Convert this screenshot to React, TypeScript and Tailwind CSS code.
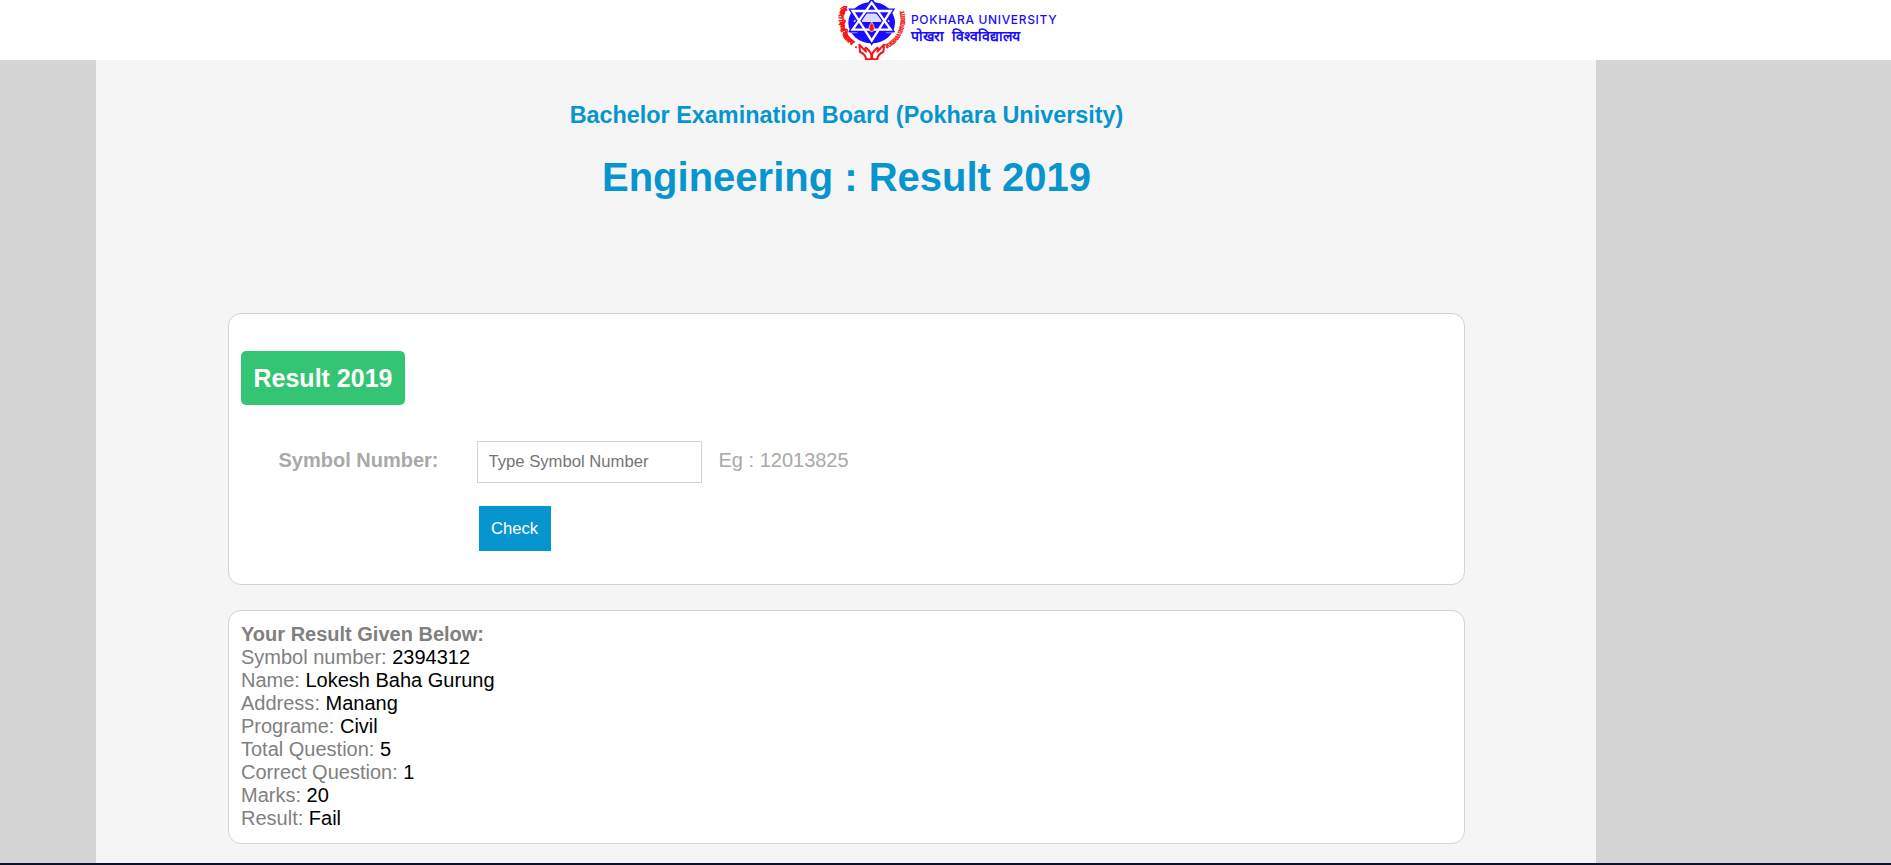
import React from "react";

const rows: [string, string][] = [
  ["Symbol number", "2394312"],
  ["Name", "Lokesh Baha Gurung"],
  ["Address", "Manang"],
  ["Programe", "Civil"],
  ["Total Question", "5"],
  ["Correct Question", "1"],
  ["Marks", "20"],
  ["Result", "Fail"],
];

function Emblem() {
  return (
    <svg viewBox="0 0 216 180" className="h-[60px] w-[72px] shrink-0">
      <defs>
        <path id="ringLeft" d="M 20 14 A 97 97 0 0 0 50 138" />
        <path id="ringRight" d="M 153 145 A 97 97 0 0 0 201 26" />
      </defs>
      <ellipse cx="107" cy="68" rx="70" ry="62" fill="#1a0dff" />
      <path d="M52 66 q6 -14 20 -14 q8 -12 16 -8 q8 -10 16 -4 q14 -6 22 6 q8 -2 16 6 q14 2 20 14 z" fill="#dddcff" />
      <path d="M40 88 h24 v12 h-22z M150 88 h24 l-2 12 h-22z" fill="#8f8aff" />
      <path d="M107 6 L164 89 H50 Z" fill="none" stroke="#1a0dff" strokeWidth="15" />
      <path d="M107 123 L164 33 H50 Z" fill="none" stroke="#1a0dff" strokeWidth="15" />
      <path d="M107 8 L164 89 H50 Z" fill="none" stroke="#fff" strokeWidth="7" />
      <path d="M107 122 L164 33 H50 Z" fill="none" stroke="#fff" strokeWidth="7" />
      <path d="M107 66 q9 12 8 20 q-1 9 -8 9 q-7 0 -8 -9 q-1 -8 8 -20z" fill="#f51414" stroke="#fff" strokeWidth="2" />
      <path d="M70 134 l2 22 q18 8 18 22 h15 q4 -16 -5 -25 l-10 -10 q-5 3 0 12 z" fill="#fff" stroke="#f51414" strokeWidth="6" strokeLinejoin="round" />
      <path d="M144 134 l-2 22 q-18 8 -18 22 h-15 q-4 -16 5 -25 l10 -10 q5 3 0 12 z" fill="#fff" stroke="#f51414" strokeWidth="6" strokeLinejoin="round" />
      <circle cx="60" cy="142" r="3" fill="#f51414" />
      <circle cx="154" cy="142" r="3" fill="#f51414" />
      <g fill="#f51414" stroke="#f51414" strokeWidth="1.6" fontWeight="700">
        <text fontSize="21" fontFamily="Liberation Sans, sans-serif">
          <textPath href="#ringLeft" textLength="136" lengthAdjust="spacingAndGlyphs">पोखरा विश्वविद्यालय</textPath>
        </text>
        <text fontSize="18" fontFamily="Liberation Serif, serif">
          <textPath href="#ringRight" textLength="134" lengthAdjust="spacingAndGlyphs">POKHARA UNIVERSITY</textPath>
        </text>
      </g>
    </svg>
  );
}

export default function App() {
  return (
    <div className="flex h-[865px] w-full flex-col overflow-hidden border-b-2 border-[#08142b] bg-[#d4d4d4] font-['Liberation_Sans',Arial,sans-serif]">
      <header className="flex h-[60px] shrink-0 bg-white pl-[836px]">
        <Emblem />
        <div className="pt-[11px] pl-[3px] text-[#1a0dff]">
          <div className="font-['Inter',sans-serif] text-[12px] leading-[17px] font-medium tracking-[0.67px]">POKHARA UNIVERSITY</div>
          <div className="text-[14px] leading-[16px] font-bold [word-spacing:4px]">पोखरा विश्वविद्यालय</div>
        </div>
      </header>
      <main className="ml-[96px] flex w-[1500px] flex-1 flex-col items-center bg-[#f5f5f5]">
        <h2 className="mt-[41px] pl-[1px] text-[23.4px] leading-[28px] font-bold text-[#0795cf]">
          Bachelor Examination Board (Pokhara University)
        </h2>
        <h1 className="mt-[25px] pl-[1px] text-[40px] leading-[46px] font-bold text-[#0795cf]">Engineering : Result 2019</h1>
        <section className="mt-[113px] h-[272px] w-[1237px] shrink-0 rounded-[13px] border border-[#d3d3d3] bg-white pt-[37px] pl-[12px]">
          <div className="h-[54px] w-[164px] rounded-[5px] bg-[#34c574] pl-[13px] text-[25px] leading-[54px] font-bold text-white">
            Result 2019
          </div>
          <div className="mt-[36px] flex h-[42px] pl-[38px] text-[20px] leading-[38px] text-[#a9a9a9]">
            <label className="w-[198px] font-bold">Symbol Number:</label>
            <input
              className="h-[42px] w-[225px] border border-[#d3d3d3] px-[11px] text-[16.65px] placeholder:text-[#757575]"
              placeholder="Type Symbol Number"
            />
            <span className="ml-[17px]">Eg : 12013825</span>
          </div>
          <button className="mt-[23px] ml-[238px] block h-[45px] w-[72px] bg-[#0795cf] pt-[2px] text-[16.65px] text-white">Check</button>
        </section>
        <section className="mt-[25px] h-[234px] w-[1237px] shrink-0 rounded-[13px] border border-[#d3d3d3] bg-white pt-[12px] pl-[12.5px] text-[20px] leading-[23px] text-[#808080]">
          <div className="font-bold">Your Result Given Below:</div>
          {rows.map(([k, v]) => (
            <div key={k}>
              {k}: <span className="text-black">{v}</span>
            </div>
          ))}
        </section>
      </main>
    </div>
  );
}
